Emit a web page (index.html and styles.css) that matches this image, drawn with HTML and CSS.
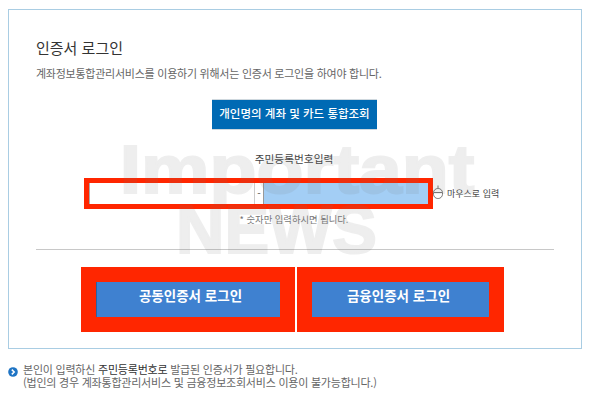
FILE: index.html
```html
<!DOCTYPE html>
<html lang="ko">
<head>
<meta charset="utf-8">
<title>인증서 로그인</title>
<link rel="stylesheet" href="styles.css">
</head>
<body>
<div class="card">
  <h1 class="title">인증서 로그인</h1>
  <p class="desc">계좌정보통합관리서비스를 이용하기 위해서는 인증서 로그인을 하여야 합니다.</p>
  <div class="center"><a class="primary">개인명의 계좌 및 카드 통합조회</a></div>
  <div class="label">주민등록번호입력</div>
  <div class="id-row">
    <div class="id-box">
      <div class="id-first"></div>
      <div class="id-dash">-</div>
      <div class="id-second"></div>
    </div>
    <div class="mouse">
      <svg class="mouse-icon" width="10" height="14" viewBox="0 0 10 14"><rect x="0.500" y="3.500" width="9" height="10" rx="4.300" fill="none" stroke="#777"/><path d="M0.800 7.500h8.400M5 3.500V0.500" fill="none" stroke="#777"/></svg>
      <span>마우스로 입력</span>
    </div>
  </div>
  <div class="hint">* 숫자만 입력하시면 됩니다.</div>
  <hr class="rule">
  <div class="logins">
    <div class="frame frame-a"><a class="login login-a">공동인증서 로그인</a></div>
    <div class="frame frame-b"><a class="login login-b">금융인증서 로그인</a></div>
  </div>
  <div class="watermark" aria-hidden="true"><span class="imp">Important</span><span class="news">NEWS</span></div>
</div>
<div class="note">
  <svg class="bullet" width="10" height="10" viewBox="0 0 10 10"><circle cx="5" cy="5" r="4.800" fill="#1f74c4"/><path d="M3.800 2.600 6.200 5 3.800 7.400" fill="none" stroke="#fff" stroke-width="1.500"/></svg>
  <p>본인이 입력하신 <span class="strong">주민등록번호로</span> 발급된 인증서가 필요합니다.<br>(법인의 경우 계좌통합관리서비스 및 금융정보조회서비스 이용이 불가능합니다.)</p>
</div>
</body>
</html>
```
FILE: styles.css
```css
* { box-sizing: border-box; }
html, body { margin: 0; padding: 0; }
body {
  width: 592px; height: 400px; overflow: hidden; background: #fff;
  font-family: "Noto Sans CJK KR", "Liberation Sans", sans-serif; color: #666;
  padding: 9px 0 0 8px;
}
.card {
  position: relative; width: 574px; height: 340px;
  border: 1px solid #a9cde3; padding: 27px 27px 0 27px;
}
.watermark {
  position: absolute; left: 110px; top: 130px; width: 354px;
  display: flex; flex-direction: column; align-items: center;
  font-family: "Liberation Sans", sans-serif; font-weight: 700; color: #777;
  -webkit-text-stroke: 2px #777; opacity: 0.12;
  font-size: 69px; line-height: 60px; white-space: nowrap; pointer-events: none;
}
.imp { display: block; margin-left: 2px; transform: scaleX(1.115); }
.news { display: block; margin-right: 40px; transform: scaleX(0.97); }
.title { margin: 0; font-size: 15px; line-height: 22px; font-weight: 400; color: #333; }
.desc { margin: 6px 0 0; font-size: 11px; line-height: 16px; color: #666; letter-spacing: -0.250px; white-space: nowrap; }
.center { display: flex; margin: 18px 0 0 176px; }
.primary {
  display: block; width: 165px; height: 31px; background: #006ab4; color: #fff;
  font-size: 11.500px; line-height: 27px; text-align: center; font-weight: 500;
  border-top: 1px solid #cfd8de; border-bottom: 1px solid #cfd8de;
}
.label { margin-top: 21px; padding-right: 2px; font-size: 10.700px; line-height: 16px; text-align: center; color: #444; }
.id-row { display: flex; align-items: center; margin: 11px 0 0 48px; }
.id-box { display: flex; width: 349px; height: 31px; border: 5px solid #ff2600; background: #fff; flex: none; }
.id-first { width: 165px; border-left: 1px solid #aaa; }
.id-dash { width: 9px; border-left: 1px solid #ccc; font-size: 10px; line-height: 19px; text-align: center; color: #555; }
.id-second { flex: 1; background: #a3cef5; border-left: 1px solid #999; }
.mouse { display: flex; align-items: center; gap: 4px; font-size: 9px; color: #444; white-space: nowrap; }
.mouse-icon { display: block; margin-bottom: 3px; }
.hint { margin-top: 4px; padding-right: 2px; font-size: 9.300px; line-height: 12px; text-align: center; color: #777; }
.rule { margin: 24px 0 0; border: 0; border-top: 1px solid #c8c8c8; height: 1px; width: 518px; }
.logins { display: flex; gap: 2px; margin: 17px 0 0 45px; }
.frame { height: 65px; padding: 15px; background: #ff2600; }
.frame-a { width: 214px; }
.frame-b { width: 207px; }
.login {
  display: block; height: 35px; background: #3f81d0; color: #fff;
  font-size: 13.500px; line-height: 27px; font-weight: 700; text-align: center;
}
.login-a { border-left: 1px solid #2a62a0; padding-left: 4px; }
.login-b { padding-right: 4px; }
.note { display: flex; gap: 5px; margin: 14px 0 0 0; }
.bullet { display: block; margin-top: 4px; flex: none; }
.note p { margin: 0; font-size: 11px; line-height: 13px; color: #666; letter-spacing: -0.220px; white-space: nowrap; }
.strong { color: #333; }
```
